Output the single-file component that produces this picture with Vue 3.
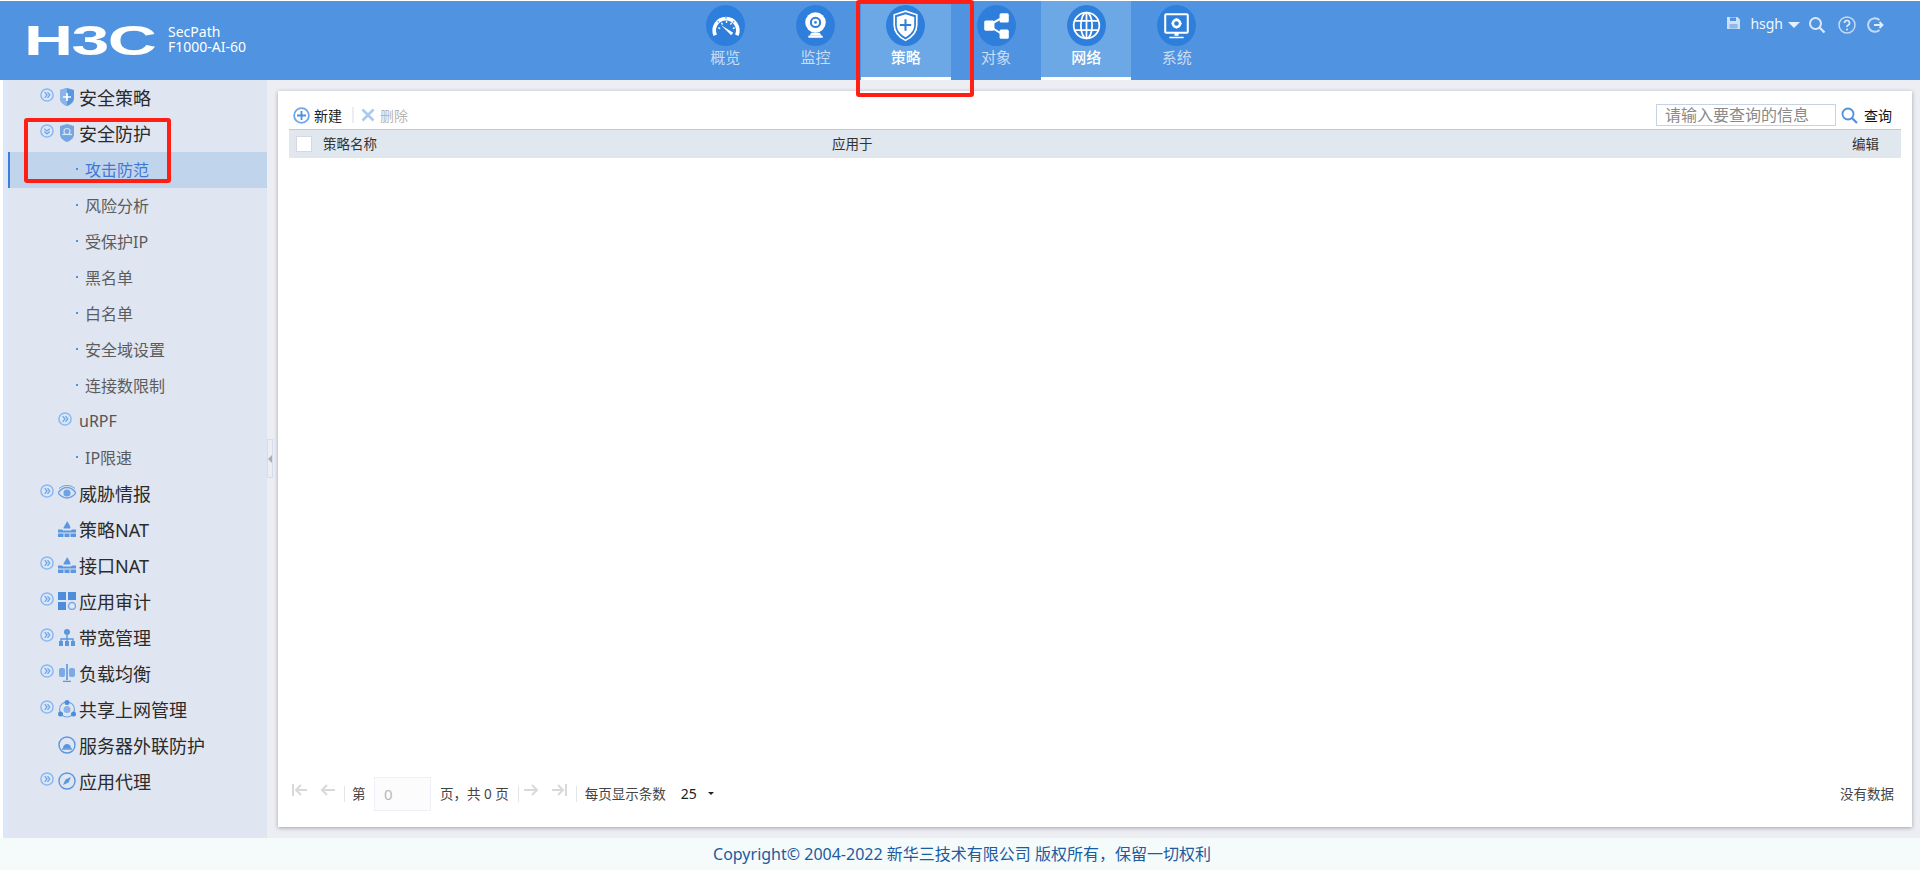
<script setup>
const tabs = [
  { name: '概览', icon: 'gauge' },
  { name: '监控', icon: 'camera' },
  { name: '策略', icon: 'shield', active: true },
  { name: '对象', icon: 'share' },
  { name: '网络', icon: 'globe', active: true },
  { name: '系统', icon: 'monitor' }
]

const navIcons = {
  gauge: '<path d="M9 29.500a11.500 11.500 0 1 1 21 0" fill="none" stroke="#fff" stroke-width="3.600"/><path d="M12 22l1.800 1M15 17.500l1.200 1.500M20 15.500v2M25 17.500l-1.200 1.500M28 22l-1.800 1" stroke="#fff" stroke-width="1.300"/><path d="M14.500 19.500L26.500 27 24.500 29.500z" fill="#fff"/><path d="M12.500 17l-1 -1M19.500 13.500v-2M26.500 17l1-1" stroke="#2e7fdc" stroke-width="1"/>',
  camera: '<circle cx="19" cy="17" r="10" fill="#fff"/><circle cx="19" cy="17" r="4.500" fill="none" stroke="#2e7fdc" stroke-width="2"/><circle cx="19" cy="17" r="1.300" fill="#2e7fdc"/><path d="M15 27l-2 3h12l-2-3z" fill="#fff"/><path d="M12 31h14" stroke="#fff" stroke-width="2"/>',
  shield: '<path d="M19 6l11 3.500v10c0 7-5 12-11 15-6-3-11-8-11-15v-10z" fill="none" stroke="#fff" stroke-width="1.600"/><path d="M19 9l8.500 2.600v8c0 5.500-4 9.500-8.500 11.800-4.500-2.300-8.500-6.300-8.500-11.800v-8z" fill="#fff"/><path d="M19 14v11M13.500 19.500h11" stroke="#2e7fdc" stroke-width="2"/>',
  share: '<path d="M11 20l16-9M11 20l16 10" stroke="#fff" stroke-width="2"/><rect x="7" y="15" width="10" height="10" rx="1.500" fill="#fff"/><rect x="22" y="8" width="9" height="9" rx="1.500" fill="#fff"/><rect x="22" y="24" width="9" height="9" rx="1.500" fill="#fff"/>',
  globe: '<g fill="none" stroke="#fff" stroke-width="1.700"><circle cx="19" cy="20" r="12.500"/><ellipse cx="19" cy="20" rx="5.500" ry="12.500"/><path d="M19 7.500v25M7 15.500h24M7 24.500h24"/></g>',
  monitor: '<path d="M9 9h20a1 1 0 0 1 1 1v16a1 1 0 0 1-1 1H9a1 1 0 0 1-1-1V10a1 1 0 0 1 1-1z" fill="none" stroke="#fff" stroke-width="2"/><circle cx="19" cy="18" r="3.500" fill="none" stroke="#fff" stroke-width="2.500"/><path d="M19 13v2M19 21v2M14 18h2M22 18h2" stroke="#fff" stroke-width="1.500"/><path d="M17 27h4v3h-4zM12 31h14v1.500H12z" fill="#fff"/>'
}

const sideIcons = {
  shieldPlus: '<path d="M9 0l7 2v8c0 4-3 6.500-7 8-4-1.500-7-4-7-8V2z" fill="#5a97e0"/><path d="M2 2l7-2v18c-4-1.500-7-4-7-8z" fill="#8ab4e8"/><path d="M9 5v8M5 9h8" stroke="#fff" stroke-width="1.700"/>',
  shieldFace: '<path d="M9 0l7 2v8c0 4-3 6.500-7 8-4-1.500-7-4-7-8V2z" fill="#74a6e2"/><circle cx="9" cy="7.500" r="3" fill="none" stroke="#d5e3f5" stroke-width="1.200"/><path d="M4 10.500h10" stroke="#d5e3f5" stroke-width="1.200"/>',
  eye: '<path d="M0 9c3-4 6-5.500 9-5.500S15 5 18 9c-3 3.500-6 5-9 5s-6-1.500-9-5z" fill="none" stroke="#6ea3e3" stroke-width="1.400"/><circle cx="9" cy="9" r="3.600" fill="#6ea3e3"/><path d="M1 4.500C4 2 6.500 1.500 9 1.500s5 .5 8 3" fill="none" stroke="#6ea3e3"/>',
  firewall: '<path d="M9 1c1 2 3.500 4 3.500 7.500h-7C5.500 6 8 4.500 9 1zM0 9.500h4l1 1h8l1-1h4v3H0zM0 13.500h18V17H0z" fill="#5a97e0"/><path d="M6 13.500V17M12 13.500V17" stroke="#dfe5f1"/>',
  apps: '<rect x="0" y="0" width="8" height="8" fill="#4d8ddb"/><rect x="10" y="0" width="8" height="8" fill="#4d8ddb"/><rect x="0" y="10" width="8" height="8" fill="#4d8ddb"/><circle cx="14" cy="14" r="3.500" fill="none" stroke="#7aa9e3" stroke-width="1.500"/>',
  tree: '<circle cx="9" cy="4" r="3" fill="#5a97e0"/><path d="M9 7v4M3 14v-3h12v3M9 11v3" fill="none" stroke="#5a97e0" stroke-width="1.400"/><rect x="1" y="13" width="4" height="5" fill="#5a97e0"/><rect x="7" y="13" width="4" height="5" fill="#5a97e0"/><rect x="13" y="13" width="4" height="5" fill="#5a97e0"/>',
  scale: '<path d="M9 0v16M5 17.500h8" stroke="#5a97e0" stroke-width="1.600"/><rect x="1" y="4" width="6" height="9" rx="2" fill="#7aa9e3"/><rect x="11" y="4" width="6" height="9" rx="2" fill="#7aa9e3"/>',
  share: '<circle cx="9" cy="9.500" r="7.500" fill="none" stroke="#6ea3e3" stroke-width="1.200"/><circle cx="9" cy="9.500" r="3.500" fill="#8ab4e8"/><circle cx="9" cy="2.500" r="2.500" fill="#4d8ddb"/><circle cx="2.500" cy="14" r="2.500" fill="#4d8ddb"/><circle cx="15.500" cy="14" r="2.500" fill="#4d8ddb"/>',
  alarm: '<circle cx="9" cy="9" r="8" fill="none" stroke="#5a97e0" stroke-width="1.400"/><path d="M5 12.500a4 4.500 0 0 1 8 0z" fill="#5a97e0"/><path d="M4 13h10" stroke="#5a97e0" stroke-width="1.400"/>',
  compass: '<circle cx="9" cy="9" r="8" fill="none" stroke="#5a97e0" stroke-width="1.400"/><path d="M13 5L10.500 10.500 7.500 7.500zM5 13l2.500-5.500 3 3z" fill="#5a97e0"/>'
}

const menu = [
  { name: '安全策略', level: 1, arrow: true, icon: 'shieldPlus' },
  { name: '安全防护', level: 1, arrow: 'open', icon: 'shieldFace' },
  { name: '攻击防范', level: 3, active: true },
  { name: '风险分析', level: 3 },
  { name: '受保护IP', level: 3 },
  { name: '黑名单', level: 3 },
  { name: '白名单', level: 3 },
  { name: '安全域设置', level: 3 },
  { name: '连接数限制', level: 3 },
  { name: 'uRPF', level: 2, arrow: true },
  { name: 'IP限速', level: 3 },
  { name: '威胁情报', level: 1, arrow: true, icon: 'eye' },
  { name: '策略NAT', level: 1, icon: 'firewall' },
  { name: '接口NAT', level: 1, arrow: true, icon: 'firewall' },
  { name: '应用审计', level: 1, arrow: true, icon: 'apps' },
  { name: '带宽管理', level: 1, arrow: true, icon: 'tree' },
  { name: '负载均衡', level: 1, arrow: true, icon: 'scale' },
  { name: '共享上网管理', level: 1, arrow: true, icon: 'share' },
  { name: '服务器外联防护', level: 1, icon: 'alarm' },
  { name: '应用代理', level: 1, arrow: true, icon: 'compass' }
]
</script>

<template>
  <div class="page">
    <header class="header">
      <div class="brand">
        <div class="logo-box"><span class="logo">H3C</span></div>
        <div class="model">
          <div>SecPath</div>
          <div>F1000-AI-60</div>
        </div>
      </div>
      <nav class="nav">
        <div v-for="tab in tabs" :key="tab.name" class="tab" :class="{ active: tab.active }">
          <svg class="tab-icon" viewBox="0 0 38 40" width="39" height="41">
            <ellipse cx="19" cy="20" rx="19" ry="20" fill="#2e7fdc" />
            <g v-html="navIcons[tab.icon]"></g>
          </svg>
          <span>{{ tab.name }}</span>
        </div>
      </nav>
      <div class="user">
        <svg width="15" height="14" viewBox="0 0 15 14"><path d="M1 1h10.500L14 3.500V13H1z" fill="#cfe0f6" /><path d="M4 1.500h6v3.500H4z" fill="#5093e1" /><path d="M3.500 8h8v4.500h-8z" fill="#8db9ec" /></svg>
        <span class="uname">hsgh</span>
        <i class="caret"></i>
        <svg class="u-search" width="18" height="18" viewBox="0 0 18 18"><circle cx="7.500" cy="7.500" r="5.500" fill="none" stroke="#dce9f8" stroke-width="2" /><path d="M11.500 11.500l5 5" stroke="#dce9f8" stroke-width="2.400" /></svg>
        <svg class="u-help" width="18" height="18" viewBox="0 0 18 18"><circle cx="9" cy="9" r="8" fill="none" stroke="#c4dbf5" stroke-width="1.500" /><path d="M6.500 7a2.500 2.500 0 1 1 3.500 2.300c-.7.400-1 .8-1 1.700" fill="none" stroke="#e4eefa" stroke-width="1.600" /><circle cx="9" cy="13.500" r="1" fill="#e4eefa" /></svg>
        <svg class="u-exit" width="18" height="18" viewBox="0 0 18 18"><path d="M13.500 4A6.800 6.800 0 1 0 13.500 14" fill="none" stroke="#c4dbf5" stroke-width="2" /><path d="M8 9h8M13.500 6l3 3-3 3" fill="none" stroke="#e4eefa" stroke-width="1.800" /></svg>
      </div>
    </header>

    <div class="body">
      <aside class="side">
        <div
          v-for="item in menu"
          :key="item.name"
          class="row"
          :class="['l' + item.level, { on: item.active, noarrow: !item.arrow }]"
        >
          <svg v-if="item.arrow" class="arrow" width="14" height="14" viewBox="0 0 14 14">
            <circle cx="7" cy="7" r="6.100" fill="#dce8f8" stroke="#8ab8f0" stroke-width="1.500" />
            <path
              v-if="item.arrow === 'open'"
              d="M4.200 4.700L7 7l2.800-2.300M4.200 7.500L7 9.800l2.800-2.300"
              fill="none"
              stroke="#6fa5e8"
              stroke-width="1.300"
            />
            <path v-else d="M4.700 4.200L7 7l-2.300 2.800M7.500 4.200L9.800 7l-2.300 2.800" fill="none" stroke="#6fa5e8" stroke-width="1.300" />
          </svg>
          <svg v-if="item.icon" class="ico" width="18" height="18" viewBox="0 0 18 18" v-html="sideIcons[item.icon]"></svg>
          <i v-if="item.level === 3" class="dot"></i>
          <span>{{ item.name }}</span>
        </div>
      </aside>

      <main class="main">
        <div class="splitter"><i></i></div>
        <section class="card">
          <div class="toolbar">
            <svg width="17" height="17" viewBox="0 0 17 17"><circle cx="8.500" cy="8.500" r="7.400" fill="none" stroke="#6ea6e8" stroke-width="1.800" /><path d="M8.500 4v9M4 8.500h9" stroke="#4f8fdc" stroke-width="1.800" /></svg>
            <span class="tool">新建</span>
            <i class="tool-sep"></i>
            <svg width="14" height="14" viewBox="0 0 14 14"><path d="M1.500 1.500l11 11M12.500 1.500l-11 11" stroke="#a9c9ef" stroke-width="2.600" /></svg>
            <span class="tool off">删除</span>
            <input class="search" placeholder="请输入要查询的信息" />
            <svg class="search-ico" width="17" height="17" viewBox="0 0 17 17"><circle cx="7" cy="7" r="5.500" fill="none" stroke="#4f8fdc" stroke-width="1.800" /><path d="M11 11l5 5" stroke="#4f8fdc" stroke-width="2.200" /></svg>
            <span class="tool query">查询</span>
          </div>
          <div class="thead">
            <i class="check"></i>
            <span class="col-name">策略名称</span>
            <span class="col-apply">应用于</span>
            <span class="col-edit">编辑</span>
          </div>
          <div class="tbody"></div>
          <div class="pager">
            <svg class="pg first" width="16" height="12" viewBox="0 0 16 12"><path d="M1 0v12M15 6H4M9 1L4 6l5 5" fill="none" stroke="#d9d9d9" stroke-width="2" /></svg>
            <svg class="pg prev" width="15" height="12" viewBox="0 0 15 12"><path d="M15 6H2M7 1L2 6l5 5" fill="none" stroke="#d9d9d9" stroke-width="2" /></svg>
            <i class="pg-sep"></i>
            <span>第</span>
            <input class="page-no" value="0" />
            <span>页，共 0 页</span>
            <i class="pg-sep"></i>
            <svg class="pg next" width="15" height="12" viewBox="0 0 15 12"><path d="M0 6h13M8 1l5 5-5 5" fill="none" stroke="#d9d9d9" stroke-width="2" /></svg>
            <svg class="pg last" width="16" height="12" viewBox="0 0 16 12"><path d="M15 0v12M1 6h11M7 1l5 5-5 5" fill="none" stroke="#d9d9d9" stroke-width="2" /></svg>
            <i class="pg-sep last-sep"></i>
            <span>每页显示条数</span>
            <span class="size">25</span>
            <i class="size-caret"></i>
            <span class="nodata">没有数据</span>
          </div>
        </section>
      </main>
    </div>

    <footer class="footer">Copyright© 2004-2022 新华三技术有限公司 版权所有，保留一切权利</footer>

    <div class="mark mark-nav"></div>
    <div class="mark mark-side"></div>
  </div>
</template>

<style scoped>
.page {
  position: relative;
  width: 1920px;
  height: 870px;
  overflow: hidden;
  padding-top: 1px;
  box-sizing: border-box;
  display: flex;
  flex-direction: column;
  background: #fff;
  font-family: "Noto Sans", "Noto Sans CJK SC", sans-serif;
  color: #333;
}

.header {
  height: 79px;
  flex: none;
  display: flex;
  background: #5093e1;
  color: #fff;
}
.brand {
  width: 680px;
  display: flex;
  align-items: center;
  flex: none;
}
.logo-box {
  width: 168px;
  flex: none;
  padding-left: 24px;
  box-sizing: border-box;
}
.logo {
  display: inline-block;
  font-family: "Liberation Sans", sans-serif;
  font-weight: bold;
  font-size: 43px;
  line-height: 44px;
  letter-spacing: -1px;
  transform: scaleX(1.58);
  transform-origin: 0 0;
  margin-top: -2px;
}
.model {
  font-size: 14px;
  line-height: 15px;
  margin-top: -4px;
}
.nav {
  display: flex;
}
.tab {
  width: 90.300px;
  height: 79px;
  box-sizing: border-box;
  padding-top: 4px;
  display: flex;
  flex-direction: column;
  align-items: center;
  font-size: 15px;
  line-height: 22px;
  color: #c9ddf5;
}
.tab-icon {
  flex: none;
}
.tab.active {
  background: #6ca7e6;
  border-bottom: 3px solid #fff;
  color: #fff;
  font-weight: 500;
}
.user {
  margin-left: auto;
  padding: 14px 36px 0 0;
  display: flex;
  align-items: flex-start;
}
.user svg {
  margin-top: 1px;
}
.uname {
  font-size: 14px;
  line-height: 18px;
  margin-left: 9px;
  color: #f2f7fd;
}
.caret {
  margin: 7px 0 0 5px;
  border: 6px solid transparent;
  border-top: 6px solid #e6f0fb;
  border-bottom: 0;
}
.u-search {
  margin-left: 8px;
}
.u-help {
  margin-left: 12px;
}
.u-exit {
  margin-left: 10px;
}

.body {
  flex: 1;
  min-height: 0;
  display: flex;
}
.side {
  width: 259px;
  flex: none;
  margin-left: 3px;
  border-left: 5px solid #dce8fa;
  background: #dfe5f1;
}
.row {
  height: 36px;
  padding-bottom: 2px;
  display: flex;
  align-items: center;
  box-sizing: border-box;
  white-space: nowrap;
}
.row.l1 {
  padding-left: 32px;
  font-size: 18px;
  color: #2b2b2b;
}
.row.l1.noarrow {
  padding-left: 50px;
}
.row.l2 {
  padding-left: 50px;
  font-size: 16px;
  color: #555;
}
.row.l3 {
  padding-left: 68px;
  font-size: 16px;
  color: #5c5c5c;
}
.row.on {
  padding-left: 66px;
  background: #c0d4ec;
  border-left: 2px solid #3a7fdc;
  color: #3f78d8;
}
.arrow {
  margin: -4px 4px 0 0;
  flex: none;
}
.row.l2 .arrow {
  margin-right: 7px;
}
.ico {
  margin-right: 3px;
  flex: none;
}
.dot {
  width: 2px;
  height: 2px;
  margin-right: 7px;
  background: #4f8fdc;
  flex: none;
}

.main {
  position: relative;
  flex: 1;
  min-width: 0;
  display: flex;
  padding: 11px 8px 11px 11px;
  background: #eceef3;
}
.splitter {
  position: absolute;
  left: 0;
  top: 359px;
  width: 6px;
  height: 39px;
  border: 1px solid #d5dcf0;
  box-sizing: border-box;
  display: flex;
  align-items: center;
  justify-content: center;
}
.splitter i {
  border: 4px solid transparent;
  border-right: 4px solid #a9acb3;
  border-left: 0;
}
.card {
  flex: 1;
  min-width: 0;
  display: flex;
  flex-direction: column;
  padding: 0 11px;
  background: #fff;
  box-shadow: 0 1px 4px rgba(70, 70, 80, 0.45);
}
.toolbar {
  height: 38px;
  flex: none;
  box-sizing: border-box;
  padding: 10px 9px 0 4px;
  display: flex;
  align-items: center;
}
.tool {
  font-size: 14px;
  color: #222;
  margin-left: 4px;
}
.tool.off {
  color: #b5b5b5;
  margin-left: 5px;
}
.tool-sep {
  width: 2px;
  height: 16px;
  margin: 0 7px 0 10px;
  background: #eceef3;
}
.search {
  margin-left: auto;
  width: 180px;
  height: 22px;
  box-sizing: border-box;
  padding: 0 8px;
  border: 1px solid #c5d3e3;
  outline: 0;
  font-family: inherit;
  font-size: 16px;
  color: #333;
}
.search::placeholder {
  color: #8a8a8a;
  opacity: 1;
}
.search-ico {
  margin-left: 5px;
}
.query {
  margin-left: 6px;
  color: #111;
}
.thead {
  height: 29px;
  flex: none;
  box-sizing: border-box;
  border-top: 1px solid #c4c9cf;
  padding: 0 0 3px 7px;
  display: flex;
  align-items: center;
  background: #e1e7ee;
  font-size: 13.500px;
  color: #333;
}
.check {
  width: 16px;
  height: 16px;
  margin-top: 3px;
  box-sizing: border-box;
  border: 1px solid #d8d8d8;
  background: #fff;
}
.col-name {
  margin-left: 11px;
  width: 509px;
}
.col-edit {
  margin-left: auto;
  margin-right: 22px;
}
.tbody {
  flex: 1;
}
.pager {
  height: 34px;
  flex: none;
  box-sizing: border-box;
  margin-bottom: 16px;
  padding: 0 0 2px 3px;
  display: flex;
  align-items: center;
  font-size: 13.500px;
  color: #444;
  white-space: nowrap;
}
.pg {
  margin-top: -6px;
  flex: none;
}
.prev {
  margin-left: 12px;
}
.next {
  margin-left: -2px;
}
.last {
  margin-left: 12px;
}
.pg-sep {
  width: 1px;
  height: 16px;
  margin: 2px 7px 0 9px;
  background: #e4e6ea;
}
.last-sep {
  margin-right: 8px;
}
.page-no {
  width: 57px;
  height: 34px;
  flex: none;
  box-sizing: border-box;
  margin: 2px 9px 0 8.500px;
  padding: 0 9px;
  border: 1px solid #eef0f7;
  outline: 0;
  background: #fcfcfd;
  font-family: inherit;
  font-size: 15px;
  color: #b8b8b8;
}
.size {
  margin-left: 15px;
  font-size: 14px;
  color: #222;
}
.size-caret {
  margin-left: 11px;
  border: 3px solid transparent;
  border-top: 3px solid #222;
  border-bottom: 0;
}
.nodata {
  margin-left: auto;
  margin-right: 7px;
}

.footer {
  height: 32px;
  flex: none;
  box-sizing: border-box;
  padding: 0 0 3px 4px;
  display: flex;
  align-items: center;
  justify-content: center;
  background: #f5fafb;
  color: #1d5a9e;
  font-size: 16px;
}

.mark {
  position: absolute;
  box-sizing: border-box;
  border: 4px solid #ff1f14;
  border-radius: 3px;
}
.mark-nav {
  left: 856px;
  top: 0;
  width: 118px;
  height: 97px;
}
.mark-side {
  left: 24px;
  top: 118px;
  width: 147px;
  height: 65px;
}
</style>
